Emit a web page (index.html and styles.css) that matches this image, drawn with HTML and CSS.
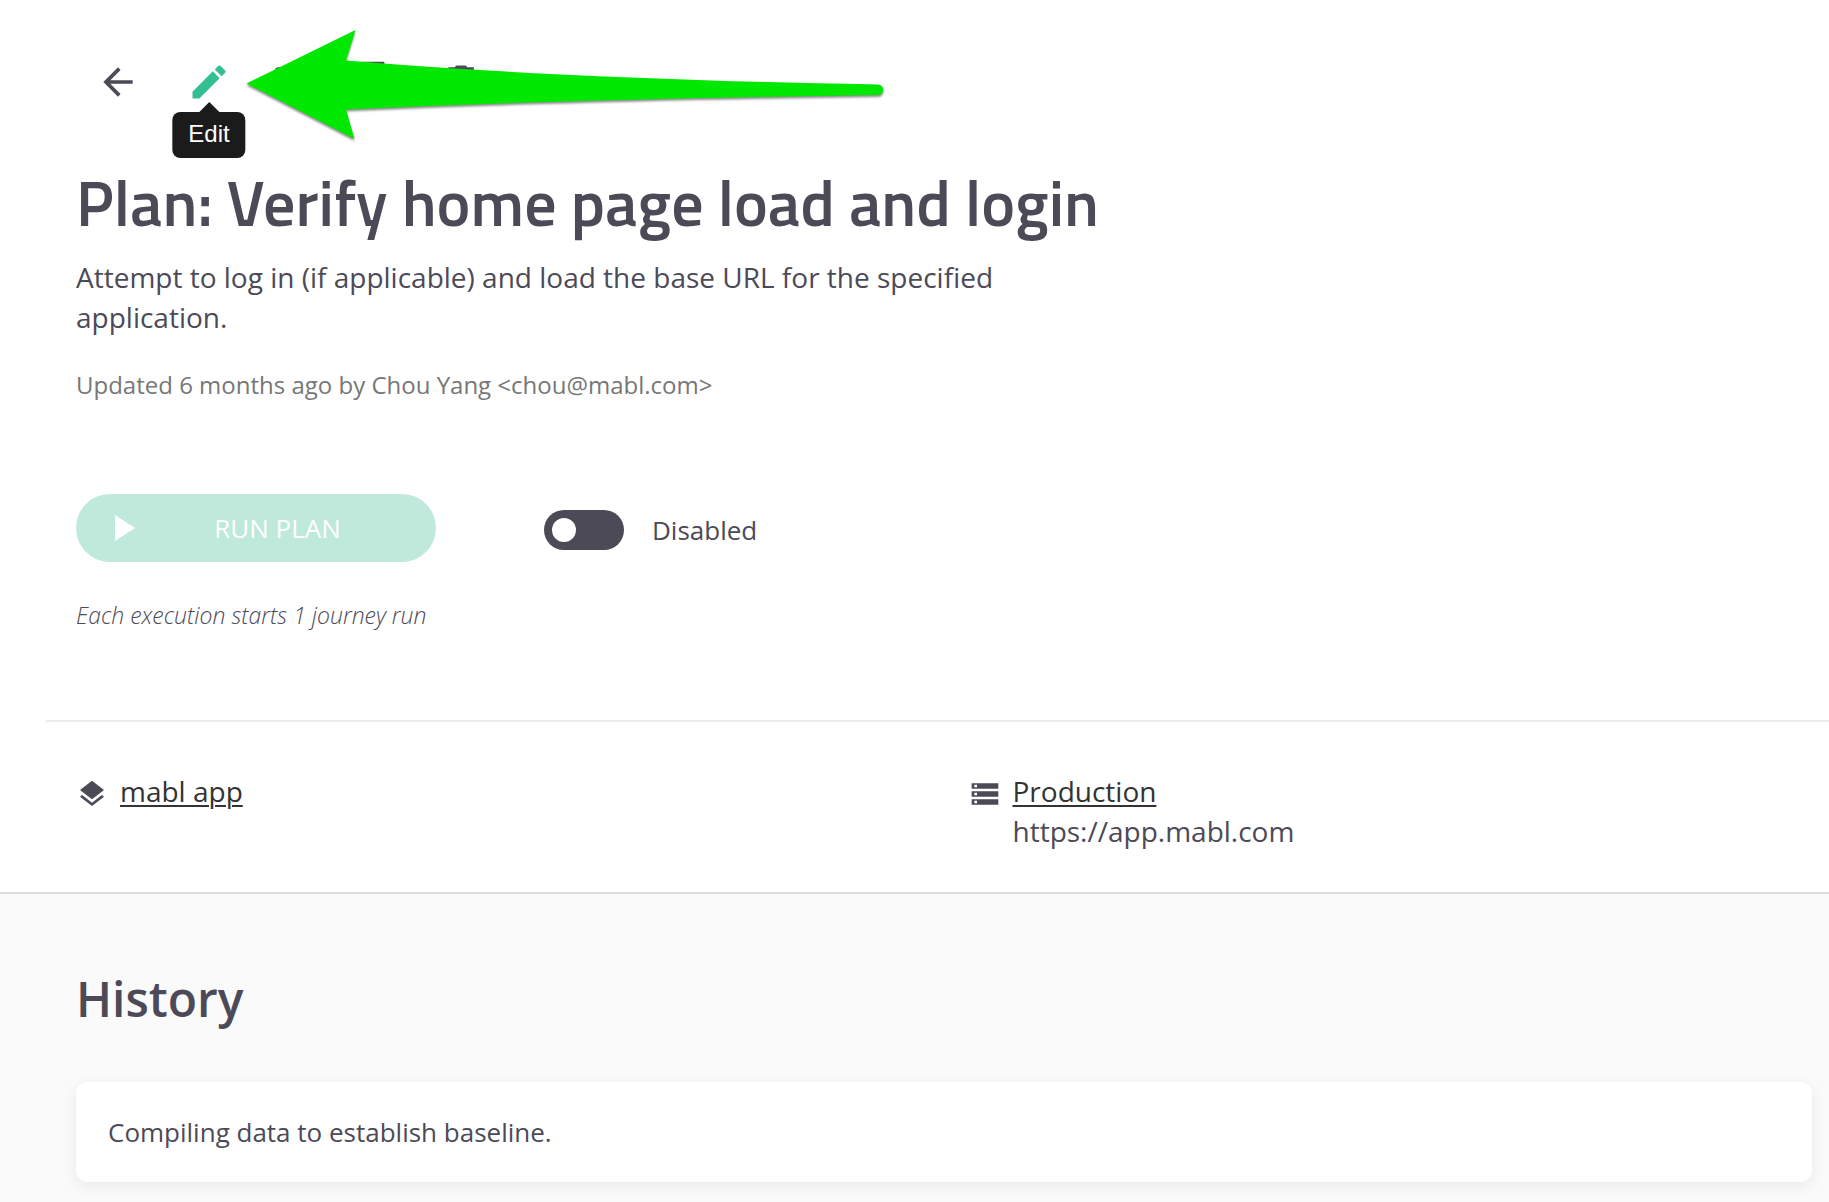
FILE: index.html
```html
<!DOCTYPE html>
<html lang="en">
<head>
<meta charset="utf-8">
<meta name="viewport" content="width=device-width, initial-scale=1">
<title>Plan: Verify home page load and login</title>
<link rel="stylesheet" href="styles.css">
</head>
<body>
<main class="page">
  <header class="plan">
    <nav class="toolbar" aria-label="Plan actions">
      <button class="tool tool-back" type="button" aria-label="Back"><svg viewBox="0 0 24 24"><path d="M20 11H7.83l5.59-5.59L12 4l-8 8 8 8 1.41-1.41L7.83 13H20v-2z"/></svg></button>
      <button class="tool tool-active" type="button" aria-describedby="edit-tip" aria-label="Edit"><svg viewBox="0 0 24 24"><path d="M3 17.25V21h3.75L17.81 9.94l-3.75-3.75L3 17.25zM20.71 7.04a1 1 0 0 0 0-1.41l-2.34-2.34a1 1 0 0 0-1.41 0l-1.83 1.83 3.75 3.75 1.83-1.83z"/></svg><span class="tooltip" id="edit-tip" role="tooltip">Edit</span></button>
      <button class="tool" type="button" aria-label="Email"><svg viewBox="0 0 24 24"><path d="M20 4H4c-1.1 0-2 .9-2 2v12c0 1.1.9 2 2 2h16c1.1 0 2-.9 2-2V6c0-1.1-.9-2-2-2zm0 4-8 5-8-5V6l8 5 8-5v2z"/></svg></button>
      <button class="tool" type="button" aria-label="Duplicate"><svg viewBox="0 0 24 24"><path d="M16 1H4c-1.1 0-2 .9-2 2v14h2V3h12V1zm3 4H8c-1.1 0-2 .9-2 2v14c0 1.1.9 2 2 2h11c1.1 0 2-.9 2-2V7c0-1.1-.9-2-2-2zm0 16H8V7h11v14z"/></svg></button>
      <button class="tool" type="button" aria-label="Delete"><svg viewBox="0 0 24 24"><path d="M6 19c0 1.1.9 2 2 2h8c1.1 0 2-.9 2-2V7H6v12zM19 4h-3.5l-1-1h-5l-1 1H5v2h14V4z"/></svg></button>
      <svg class="pointer" viewBox="0 0 640 112" aria-hidden="true"><path d="M.5 55.5 109.5 2 100 32.5Q320 51 632 56.5A5 5 0 0 1 632 67Q330 71 100 81.5L108.5 111Z"/></svg>
    </nav>
    <h1 class="title">Plan: Verify home page load and login</h1>
    <p class="description">Attempt to log in (if applicable) and load the base URL for the specified application.</p>
    <p class="updated">Updated 6 months ago by Chou Yang &lt;chou@mabl.com&gt;</p>
    <div class="controls">
      <button class="run" type="button" disabled><svg class="play" viewBox="0 0 20 26"><path d="M0 0 20 13 0 26z"/></svg><span class="run-label">RUN PLAN</span></button>
      <label class="switch"><input class="switch-input" type="checkbox" role="switch">Disabled</label>
    </div>
    <p class="note">Each execution starts 1 journey run</p>
  </header>
  <section class="targets" aria-label="Application and environment">
    <div class="target">
      <svg class="target-icon" viewBox="0 0 24 24"><path d="m11.99 18.54-7.37-5.73L3 14.07l9 7 9-7-1.63-1.27-7.38 5.74zM12 16l7.36-5.73L21 9l-9-7-9 7 1.63 1.27L12 16z"/></svg>
      <div><a class="link" href="#app">mabl app</a></div>
    </div>
    <div class="target">
      <svg class="target-icon" viewBox="0 0 24 24"><path d="M2 20h20v-4H2v4zm2-3h2v2H4v-2zM2 4v4h20V4H2zm4 3H4V5h2v2zm-4 7h20v-4H2v4zm2-3h2v2H4v-2z"/></svg>
      <div><a class="link" href="#production">Production</a><div>https://app.mabl.com</div></div>
    </div>
  </section>
  <section class="history">
    <h2 class="history-title">History</h2>
    <div class="card">Compiling data to establish baseline.</div>
  </section>
</main>
</body>
</html>
```
FILE: styles.css
```css
* { box-sizing: border-box; }

body {
  margin: 0;
  background: #fafafa;
  color: #4c4a57;
  font: 28px/40px "Open Sans", sans-serif;
}

h1, h2, p { margin: 0; }
svg { display: block; fill: currentColor; }
button { border: 0; color: inherit; font: inherit; }

.page { background: #fff; }

.plan { padding: 52px 76px 89px; }

.toolbar {
  position: relative;
  display: flex;
  gap: 24px;
  padding-left: 12px;
}

.tool {
  position: relative;
  width: 60px;
  height: 60px;
  padding: 8px;
  background: none;
}
.tool svg { width: 44px; height: 44px; }
.tool-back { margin-right: 7px; }
.tool-active { color: #34bf93; }

.tooltip {
  position: absolute;
  top: 60px;
  left: 50%;
  padding: 2px 16px 4px;
  border-radius: 8px;
  background: #1b1b1b;
  color: #fff;
  font: 24px/40px "Liberation Sans", Arial, sans-serif;
  transform: translateX(-50%);
}
.tooltip::before {
  content: "";
  position: absolute;
  top: -10px;
  left: 50%;
  margin-left: -10px;
  border: 10px solid transparent;
  border-top: 0;
  border-bottom-color: #1b1b1b;
}

/* Callout arrow laid over the toolbar, pointing at Edit */
.pointer {
  position: absolute;
  top: -24px;
  left: 170px;
  width: 640px;
  height: 112px;
  overflow: visible;
  fill: #00e800;
  filter: drop-shadow(0 2px 1px rgba(0, 0, 0, .45));
  pointer-events: none;
}

.title {
  margin-top: 54px;
  font: 600 64px/72px "Titillium Web", "Roboto", sans-serif;
}

.description { max-width: 960px; margin-top: 19px; }

.updated {
  margin-top: 32px;
  color: #777;
  font-size: 24px;
  line-height: 32px;
}

.controls {
  display: flex;
  align-items: center;
  gap: 108px;
  margin-top: 93px;
}

.run {
  display: flex;
  align-items: center;
  width: 360px;
  height: 68px;
  padding: 0 36px 0 39px;
  border-radius: 34px;
  background: #bfe9db;
  color: #fff;
  font-size: 26px;
}
.play { width: 20px; height: 26px; }
.run-label { flex: 1; padding-left: 20px; text-align: center; }

.switch {
  display: flex;
  align-items: center;
  gap: 28px;
  padding-top: 4px;
  font-size: 26px;
}
.switch-input {
  width: 80px;
  height: 40px;
  margin: 0;
  padding: 8px;
  border-radius: 20px;
  background: #4c4a57;
  appearance: none;
}
.switch-input::before {
  content: "";
  display: block;
  width: 24px;
  height: 24px;
  border-radius: 50%;
  background: #fff;
}
.switch-input:checked { padding-left: 48px; }

.note {
  margin-top: 37px;
  font-size: 23px;
  font-style: italic;
  font-weight: 300;
  line-height: 32px;
}

.targets {
  display: grid;
  grid-template-columns: 1fr 1fr;
  gap: 2px;
  margin-left: 46px;
  padding: 49px 0 41px;
  border-top: 2px solid #ebebeb;
}
.target { display: flex; gap: 12px; padding-left: 30px; }
.target-icon { width: 32px; height: 32px; margin-top: 7px; }
.link {
  color: #333;
  text-decoration-thickness: 2px;
  text-underline-offset: 3px;
}

.history {
  padding: 73px 17px 20px 76px;
  border-top: 2px solid #ddd;
  background: #fafafa;
}
.history-title { font-size: 48px; font-weight: 600; line-height: 64px; }
.card {
  margin-top: 51px;
  padding: 30px 32px;
  border-radius: 12px;
  background: #fff;
  box-shadow: 0 4px 16px rgba(0, 0, 0, .07);
  font-size: 26px;
}
```
